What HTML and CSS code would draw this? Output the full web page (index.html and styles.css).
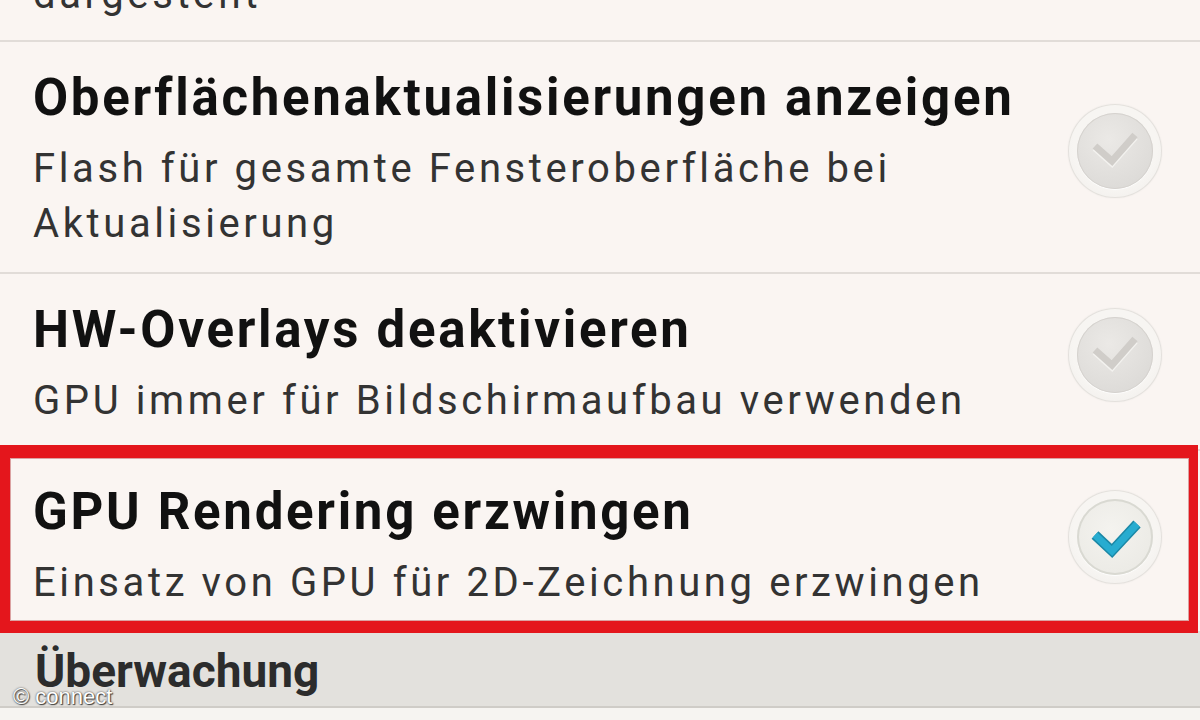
FILE: index.html
```html
<!DOCTYPE html>
<html lang="de">
<head>
<meta charset="utf-8">
<title>Entwickleroptionen</title>
<link rel="stylesheet" href="styles.css">
</head>
<body>
<div class="screen">
  <ul class="prefs">
    <li class="pref pref--cut">
      <div class="pref-text">
        <p class="pref-summary">dargestellt</p>
      </div>
    </li>
    <li class="pref">
      <div class="pref-text">
        <p class="pref-title">Oberflächenaktualisierungen anzeigen</p>
        <p class="pref-summary">Flash für gesamte Fensteroberfläche bei<br>Aktualisierung</p>
      </div>
      <span class="check">
        <span class="check-disc">
          <svg class="check-mark" viewBox="0 0 76 76" width="76" height="76" aria-hidden="true">
            <path class="mark-light" d="M18 35 L35 50 L58 24" />
            <path class="mark-off" d="M18 33 L35 48 L58 22" />
          </svg>
        </span>
      </span>
    </li>
    <li class="pref">
      <div class="pref-text">
        <p class="pref-title">HW-Overlays deaktivieren</p>
        <p class="pref-summary">GPU immer für Bildschirmaufbau verwenden</p>
      </div>
      <span class="check">
        <span class="check-disc">
          <svg class="check-mark" viewBox="0 0 76 76" width="76" height="76" aria-hidden="true">
            <path class="mark-light" d="M18 35 L35 50 L58 24" />
            <path class="mark-off" d="M18 33 L35 48 L58 22" />
          </svg>
        </span>
      </span>
    </li>
    <li class="pref pref--flagged">
      <div class="pref-text">
        <p class="pref-title">GPU Rendering erzwingen</p>
        <p class="pref-summary">Einsatz von GPU für 2D-Zeichnung erzwingen</p>
      </div>
      <span class="check check--on">
        <span class="check-disc">
          <svg class="check-mark" viewBox="0 0 76 76" width="76" height="76" aria-hidden="true">
            <path class="mark-edge" d="M18 36 L35 52 L60 25" />
            <path class="mark-on" d="M18 36 L35 52 L60 25" />
          </svg>
        </span>
      </span>
    </li>
  </ul>
  <h2 class="section-head">Überwachung</h2>
  <div class="below"></div>
  <span class="credit">© connect</span>
</div>
</body>
</html>
```
FILE: styles.css
```css
html, body {
  margin: 0;
  padding: 0;
}

body {
  width: 1200px;
  height: 720px;
  overflow: hidden;
  background: #faf5f2;
  font-family: Roboto, "Liberation Sans", sans-serif;
}

.screen {
  position: relative;
  width: 1200px;
  height: 720px;
  overflow: hidden;
  display: flex;
  flex-direction: column;
}

.prefs {
  list-style: none;
  margin: 0;
  padding: 0;
}

.pref {
  position: relative;
  display: flex;
  align-items: center;
  padding: 21px 38px 21px 33px;
  border-bottom: 2px solid #e1dcd8;
}

.pref--cut {
  margin-top: -33px;
  padding-top: 0;
  padding-bottom: 18px;
}

.pref--flagged {
  padding-top: 26px;
}

.pref--flagged::after {
  content: "";
  position: absolute;
  top: -6px;
  left: -2px;
  right: 2px;
  bottom: -2px;
  border-style: solid;
  border-color: #e4161c;
  border-width: 13px 9px 12px 12px;
  box-shadow: inset 0 0 0 1px rgba(160, 10, 15, 0.35);
  pointer-events: none;
}

.pref-text {
  flex: 1;
  min-width: 0;
}

.pref-title {
  margin: 0;
  font-size: 51px;
  line-height: 70px;
  font-weight: 700;
  letter-spacing: 2.7px;
  color: #111111;
  white-space: nowrap;
}

.pref-summary {
  margin: 8px 0 0;
  font-size: 40px;
  line-height: 55px;
  letter-spacing: 3.6px;
  color: #333333;
  white-space: nowrap;
}

.pref--cut .pref-summary {
  margin-top: 0;
}

.check {
  flex: none;
  width: 94px;
  height: 94px;
  margin-bottom: 13px;
  border-radius: 50%;
  background: radial-gradient(circle at 50% 45%, #f7f5f2 60%, #eeebe8 100%);
  box-shadow: inset 0 0 0 1px #e4e1dd, 0 0 2px rgba(0, 0, 0, 0.06);
  display: flex;
  align-items: center;
  justify-content: center;
}

.check-disc {
  width: 76px;
  height: 76px;
  border-radius: 50%;
  background: radial-gradient(circle at 42% 35%, #ebe9e6 0%, #e0dedb 60%, #d8d6d3 100%);
  box-shadow: inset 0 0 0 1px #d5d2ce, 0 1px 1px rgba(255, 255, 255, 0.9);
  display: flex;
  align-items: center;
  justify-content: center;
}

.check--on .check-disc {
  background: radial-gradient(circle at 45% 40%, #f4f3ef 0%, #ecebe6 70%, #e2e1dc 100%);
  box-shadow: inset 0 0 0 2px #d9d9d2, 0 1px 1px rgba(255, 255, 255, 0.9);
}

.check-mark {
  display: block;
}

.check-mark path {
  fill: none;
  stroke-linecap: butt;
  stroke-linejoin: miter;
}

.mark-light {
  stroke: #f3f2ef;
  stroke-width: 7px;
}

.mark-off {
  stroke: #d0cdc9;
  stroke-width: 7px;
}

.mark-edge {
  stroke: #1b88a6;
  stroke-width: 10px;
}

.mark-on {
  stroke: #27acd0;
  stroke-width: 7px;
}

.section-head {
  margin: 0;
  padding: 4px 0 0 35px;
  box-sizing: content-box;
  height: 69px;
  background: #e3e1dd;
  font-size: 46px;
  line-height: 69px;
  font-weight: 700;
  color: #2c2c2c;
  border-bottom: 2px solid #cfccc7;
}

.below {
  flex: 1;
  background: #f6f4f1;
}

.credit {
  position: absolute;
  left: 13px;
  bottom: 11px;
  font-family: "Liberation Sans", Arial, sans-serif;
  font-size: 22px;
  line-height: 24px;
  color: #ffffff;
  text-shadow: 0 0 2px #333, 1px 1px 1px rgba(0, 0, 0, 0.7);
}
```
